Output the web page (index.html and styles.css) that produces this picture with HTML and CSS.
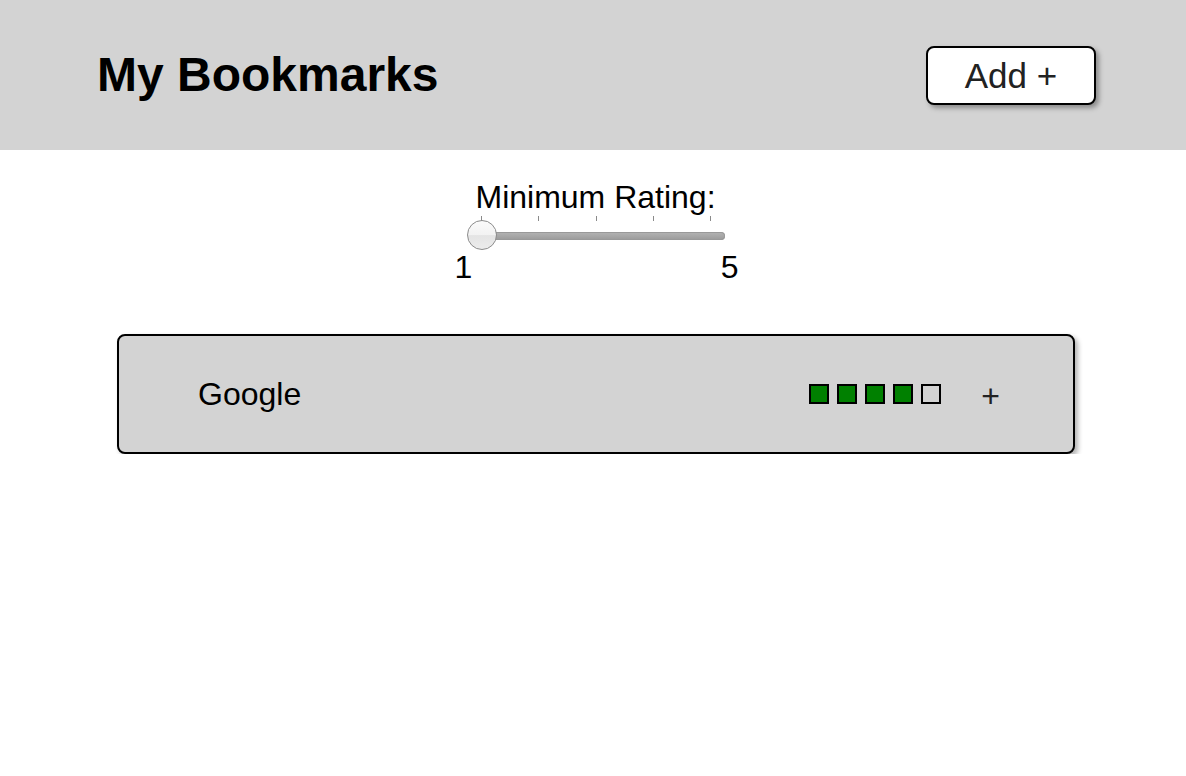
FILE: index.html
```html
<!DOCTYPE html>
<html lang="en">
<head>
<meta charset="utf-8">
<title>My Bookmarks</title>
<link rel="stylesheet" href="styles.css">
</head>
<body>
<header class="topbar">
  <h1 class="title">My Bookmarks</h1>
  <button class="add-btn">Add +</button>
</header>
<main class="content">
  <section class="filter">
    <div class="filter-label">Minimum Rating:</div>
    <div class="slider">
      <div class="ticks">
        <span class="tick"></span><span class="tick"></span><span class="tick"></span><span class="tick"></span><span class="tick"></span>
      </div>
      <div class="track"></div>
      <div class="thumb"></div>
    </div>
    <div class="range-labels"><span>1</span><span>5</span></div>
  </section>
  <ul class="bookmarks">
    <li class="bookmark">
      <span class="bookmark-name">Google</span>
      <div class="bookmark-right">
        <div class="rating">
          <span class="sq on"></span><span class="sq on"></span><span class="sq on"></span><span class="sq on"></span><span class="sq"></span>
        </div>
        <span class="more">+</span>
      </div>
    </li>
  </ul>
</main>
</body>
</html>
```

FILE: styles.css
```css
html, body {
  margin: 0;
  padding: 0;
  background: #fff;
  font-family: "Liberation Sans", Arial, Helvetica, sans-serif;
  color: #000;
}

.topbar {
  height: 150px;
  background: #d3d3d3;
  display: flex;
  align-items: center;
  justify-content: space-between;
  padding: 0 90px 0 97px;
  box-sizing: border-box;
}

.title {
  margin: 0;
  font-size: 48px;
  font-weight: bold;
  line-height: 1;
  padding-top: 0;
}

.add-btn {
  width: 170px;
  height: 59px;
  background: #fff;
  border: 2px solid #000;
  border-radius: 8px;
  box-shadow: 3px 3px 5px rgba(0, 0, 0, 0.35);
  font-family: inherit;
  font-size: 35px;
  color: #222;
  padding: 0;
  line-height: 1;
  margin-top: 1px;
}

.content {
  display: flex;
  flex-direction: column;
}

.filter {
  display: flex;
  flex-direction: column;
  align-items: center;
  padding-top: 179px;
  padding-left: 9px;
  margin-top: -150px;
}

.filter-label {
  font-size: 32px;
  line-height: 37px;
  margin-left: -4px;
}

.slider {
  position: relative;
  width: 255px;
  margin-top: 0;
}

.ticks {
  display: flex;
  justify-content: space-between;
  margin: 0 14px 0 11px;
  height: 6px;
}

.tick {
  width: 1px;
  height: 5px;
  background: #8a8a8a;
}

.track {
  margin-top: 10px;
  height: 8px;
  border-radius: 4px;
  background: linear-gradient(#b4b4b4, #9a9a9a);
  box-shadow: inset 0 0 0 1px #999;
}

.thumb {
  position: absolute;
  left: -3px;
  top: 4px;
  width: 30px;
  height: 30px;
  box-sizing: border-box;
  border-radius: 50%;
  border: 1px solid #8c8c8c;
  background: linear-gradient(#fbfbfb 0%, #f2f2f2 50%, #e4e4e4 52%, #ececec 100%);
}

.range-labels {
  display: flex;
  justify-content: space-between;
  width: 284px;
  font-size: 32px;
  line-height: 37px;
  margin-top: 9px;
  margin-left: -2px;
}

.bookmarks {
  list-style: none;
  margin: 48px 111px 0 117px;
  padding: 0;
}

.bookmark {
  height: 120px;
  box-sizing: border-box;
  border: 2px solid #000;
  border-radius: 8px;
  background: #d3d3d3;
  box-shadow: 3px 3px 5px rgba(0, 0, 0, 0.3);
  display: flex;
  align-items: center;
  justify-content: space-between;
  padding: 0 72px 0 79px;
}

.bookmark-name {
  font-size: 32px;
  line-height: 1;
}

.bookmark-right {
  display: flex;
  align-items: center;
  gap: 40px;
}

.rating {
  display: flex;
  gap: 8px;
}

.sq {
  width: 20px;
  height: 20px;
  box-sizing: border-box;
  border: 2px solid #000;
  background: transparent;
}

.sq.on {
  background: #008000;
}

.more {
  font-size: 32px;
  line-height: 1;
  color: #222;
  padding-top: 4px;
  margin-right: 1px;
}
```
